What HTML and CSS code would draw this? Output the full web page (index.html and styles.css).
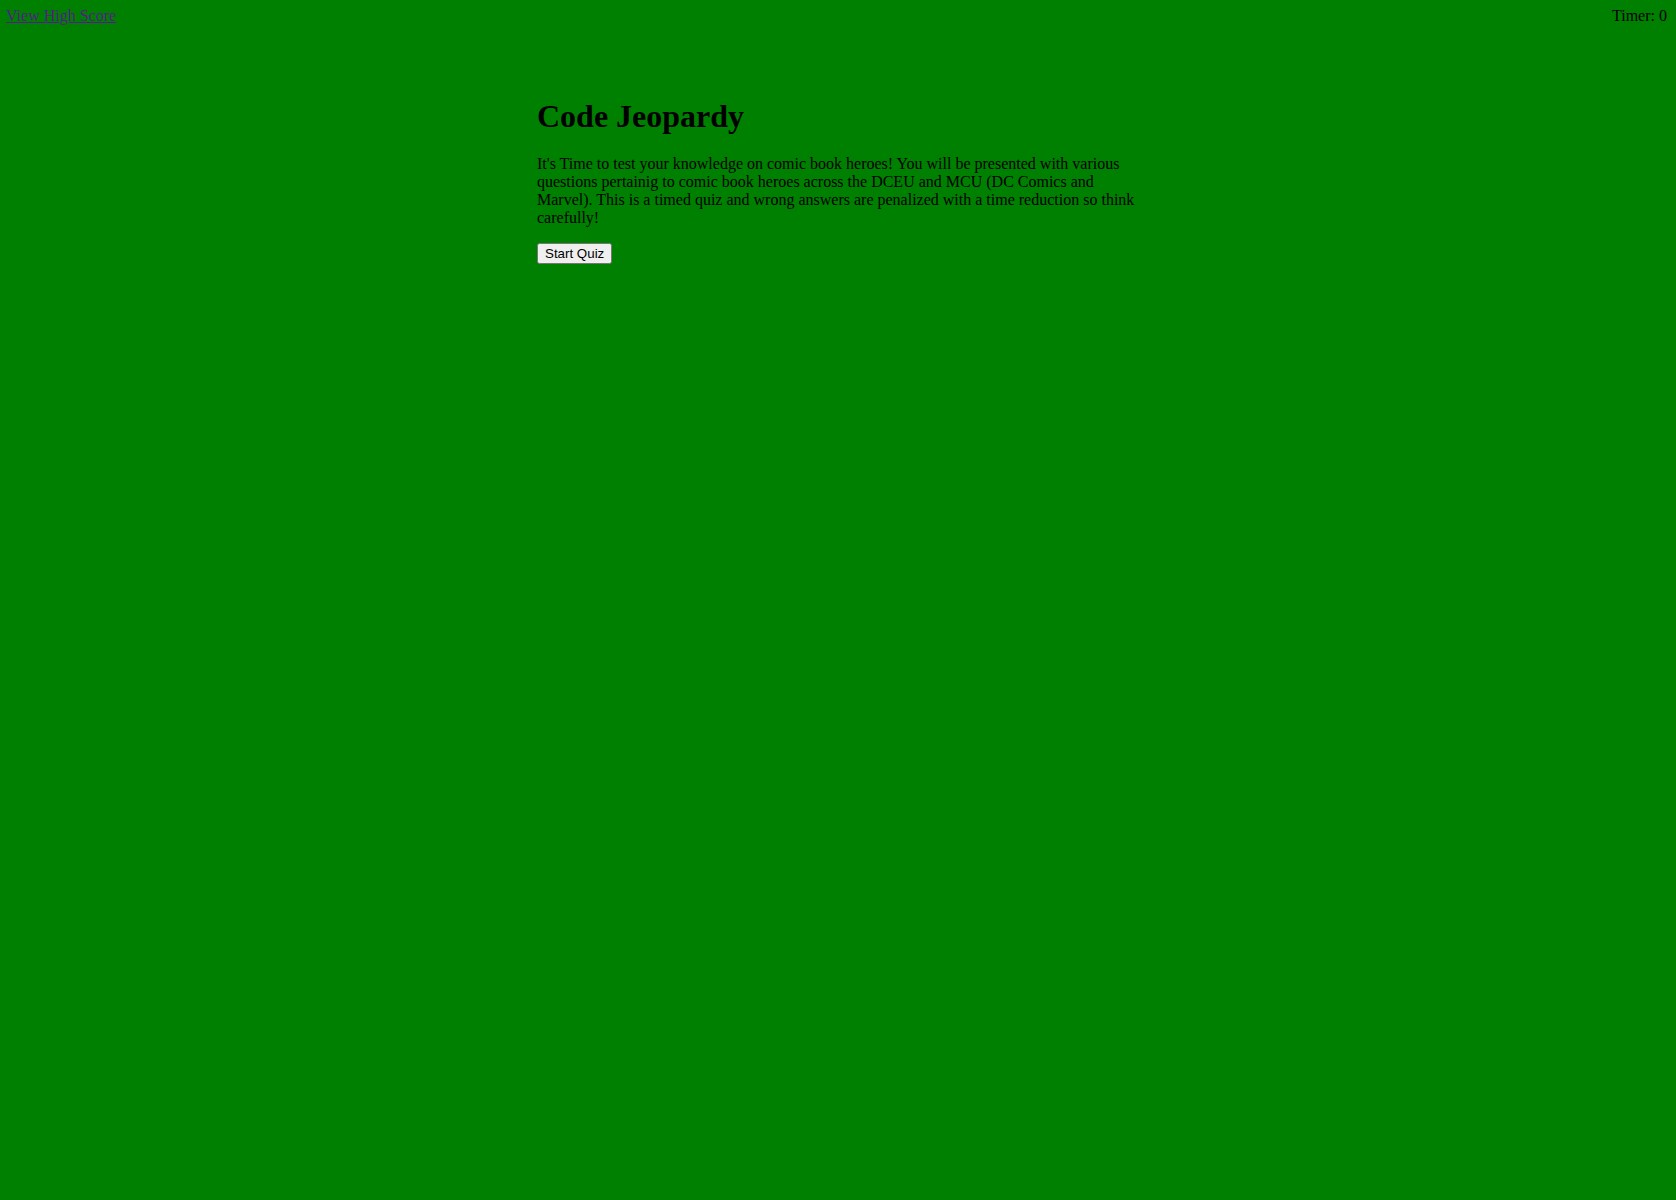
FILE: index.html
```html
<!DOCTYPE html>
<html>
<head>
<meta charset="utf-8">
<title>Code Jeopardy</title>
<link rel="stylesheet" href="styles.css">
</head>
<body>
<header class="top">
  <a class="score-link" href="#">View High Score</a>
  <div class="timer">Timer: 0</div>
</header>
<main class="intro">
  <h1 class="title">Code Jeopardy</h1>
  <p class="desc">It's Time to test your knowledge on comic book heroes! You will be presented with various questions pertainig to comic book heroes across the DCEU and MCU (DC Comics and Marvel). This is a timed quiz and wrong answers are penalized with a time reduction so think carefully!</p>
  <button class="start">Start Quiz</button>
</main>
</body>
</html>
```
FILE: styles.css
```css
html, body {
  background: #008000;
}
body {
  margin: 0;
  font-family: "Liberation Serif", "Times New Roman", serif;
  font-size: 16px;
  color: #000;
}
.top {
  display: flex;
  justify-content: space-between;
  padding: 7px 9px 0 6px;
}
.score-link, .score-link:visited {
  color: #551a8b;
}
.intro {
  width: 602px;
  margin: 73px auto 0;
}
.title {
  font-size: 32px;
  margin: 0 0 20px;
}
.desc {
  margin: 0 0 16px;
}
.start {
  font-family: "Liberation Sans", Arial, sans-serif;
  font-size: 13.333px;
  padding: 1px 6px;
}
```
